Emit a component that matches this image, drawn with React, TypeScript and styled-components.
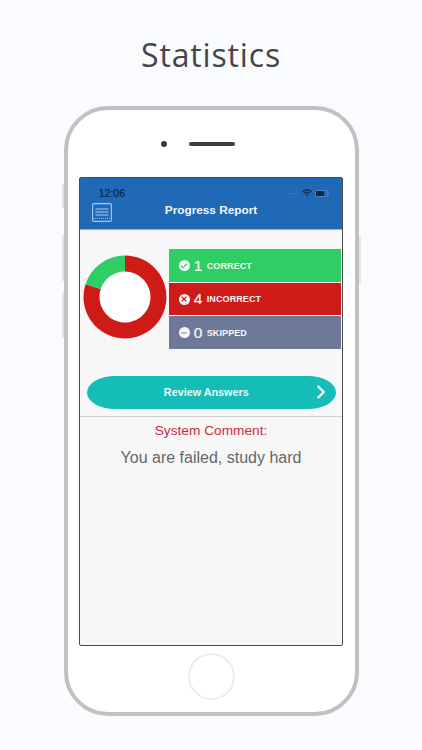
import React from "react";
import styled, { createGlobalStyle } from "styled-components";
import { Check, X, Minus, ChevronRight } from "lucide-react";

const GlobalStyle = createGlobalStyle`
    html, body {
        margin: 0;
        padding: 0;
        background-color: #FAFBFF;
        font-family: "Liberation Sans", Arial, sans-serif;
    }
`;

const Page = styled.div`
    width: 422px;
    height: 750px;
    overflow: hidden;
    display: flex;
    flex-direction: column;
    align-items: center;
    background-color: #FAFBFF;
`;

const Title = styled.h1`
    margin: 0;
    height: 106px;
    padding-top: 35px;
    box-sizing: border-box;
    font-family: "Open Sans", sans-serif;
    font-size: 32px;
    line-height: 40px;
    font-weight: 400;
    letter-spacing: 0.85px;
    color: #444548;
`;

const Phone = styled.div`
    position: relative;
    box-sizing: border-box;
    width: 295px;
    height: 610px;
    border: 4px solid #C1C1C1;
    border-radius: 44px;
    background-color: #FFFFFF;
    display: flex;
    flex-direction: column;
    align-items: center;
`;

const SideKey = styled.span<{ $side: "left" | "right"; $top: number; $height: number }>`
    position: absolute;
    ${(p) => p.$side}: -6px;
    top: ${(p) => p.$top}px;
    width: 2px;
    height: ${(p) => p.$height}px;
    background-color: #E4E4E6;
`;

const EarRow = styled.div`
    height: 67px;
    display: flex;
    align-items: center;
    gap: 22px;
    margin-left: -26px;
`;

const Camera = styled.span`
    width: 6px;
    height: 6px;
    border-radius: 50%;
    background-color: #3A3A3D;
`;

const Speaker = styled.span`
    width: 46px;
    height: 4px;
    border-radius: 2px;
    background-color: #3F3F42;
`;

const Screen = styled.div`
    box-sizing: border-box;
    width: 264.5px;
    height: 468.5px;
    border: 1.2px solid #4A4A4D;
    border-radius: 2px;
    background-color: #F7F7F7;
    display: flex;
    flex-direction: column;
`;

const Header = styled.header`
    height: 51px;
    flex-shrink: 0;
    background-color: #1F69B7;
    border-bottom: 1px solid #8FB4DB;
    display: flex;
    flex-direction: column;
`;

const StatusBar = styled.div`
    height: 21px;
    padding: 5px 12px 0 19px;
    display: flex;
    align-items: center;
    justify-content: space-between;
`;

const Clock = styled.span`
    font-size: 10.5px;
    font-weight: 400;
    color: #10253F;
    -webkit-text-stroke: 0.2px #10253F;
`;

const StatusIcons = styled.span`
    display: flex;
    align-items: center;
    gap: 3px;
`;

const NavBar = styled.div`
    position: relative;
    flex: 1;
    display: flex;
    align-items: center;
    justify-content: center;
    padding-bottom: 12px;
`;

const NavTitle = styled.span`
    font-size: 11.8px;
    font-weight: 700;
    color: #F2F6FB;
`;

const MenuButton = styled.svg`
    position: absolute;
    left: 12px;
    top: 0;
`;

const Summary = styled.section`
    display: flex;
    align-items: center;
    height: 100px;
    padding: 19px 0 0 3px;
    flex-shrink: 0;
`;

const Donut = styled.svg`
    flex-shrink: 0;
    margin: 0 2px 4px 0;
`;

const Bars = styled.div`
    width: 172px;
    display: flex;
    flex-direction: column;
    gap: 1px;
`;

const Bar = styled.div<{ $color: string }>`
    height: 32.5px;
    box-sizing: border-box;
    padding-left: 10px;
    display: flex;
    align-items: center;
    background-color: ${(p) => p.$color};
    color: #F8F8F8;
`;

const Badge = styled.span`
    width: 11px;
    height: 11px;
    border-radius: 50%;
    background-color: #F8F8F8;
    display: flex;
    align-items: center;
    justify-content: center;
    margin-right: 4px;
`;

const Count = styled.span`
    font-size: 15.5px;
    width: 13px;
    -webkit-text-stroke: 0.2px #F8F8F8;
`;

const BarLabel = styled.span`
    font-size: 9px;
    font-weight: 700;
    letter-spacing: 0.1px;
`;

const ReviewButton = styled.button`
    align-self: flex-start;
    box-sizing: border-box;
    width: 249px;
    height: 33px;
    margin: 27px 0 0 7px;
    padding: 0 4px 2px 0;
    border: none;
    border-radius: 28px / 16.5px;
    background-color: #15BDB8;
    color: #E8F8F7;
    font-family: "Liberation Sans", Arial, sans-serif;
    font-size: 10.8px;
    font-weight: 700;
    display: flex;
    align-items: center;
    justify-content: space-between;
`;

const ReviewText = styled.span`
    flex: 1;
    text-align: center;
    padding-left: 16px;
`;

const Divider = styled.hr`
    width: 100%;
    height: 1px;
    margin: 7px 0 0;
    border: none;
    background-color: #CFCFCF;
`;

const CommentTitle = styled.div`
    margin-top: 6px;
    text-align: center;
    font-size: 13.7px;
    line-height: 16px;
    color: #CC2A45;
`;

const CommentText = styled.div`
    margin-top: 9px;
    text-align: center;
    font-size: 16px;
    line-height: 20px;
    color: #666666;
`;

const HomeButton = styled.div`
    margin-top: 7px;
    box-sizing: border-box;
    width: 47px;
    height: 47px;
    border-radius: 50%;
    border: 2px solid #ECECEC;
`;

function ringPath(startDeg: number, endDeg: number) {
    const cx = 42, cy = 42, outer = 41.5, inner = 25.5;
    const pt = (r: number, d: number) => {
        const a = ((d - 90) * Math.PI) / 180;
        return `${(cx + r * Math.cos(a)).toFixed(2)} ${(cy + r * Math.sin(a)).toFixed(2)}`;
    };
    const large = endDeg - startDeg > 180 ? 1 : 0;
    return `M${pt(outer, startDeg)} A${outer} ${outer} 0 ${large} 1 ${pt(outer, endDeg)} L${pt(inner, endDeg)} A${inner} ${inner} 0 ${large} 0 ${pt(inner, startDeg)} Z`;
}

const rows = [
    { color: "#2FCE65", icon: Check, iconColor: "#2FCE65", count: 1, label: "CORRECT" },
    { color: "#CF1B18", icon: X, iconColor: "#CF1B18", count: 4, label: "INCORRECT" },
    { color: "#6E7899", icon: Minus, iconColor: "#6E7899", count: 0, label: "SKIPPED" },
];

export default function App() {
    return (
        <Page>
            <GlobalStyle />
            <Title>Statistics</Title>
            <Phone>
                <SideKey $side="left" $top={74} $height={24} />
                <SideKey $side="left" $top={125} $height={46} />
                <SideKey $side="left" $top={182} $height={46} />
                <SideKey $side="right" $top={127} $height={46} />
                <EarRow>
                    <Camera />
                    <Speaker />
                </EarRow>
                <Screen>
                    <Header>
                        <StatusBar>
                            <Clock>12:06</Clock>
                            <StatusIcons>
                                <svg width="11" height="4" viewBox="0 0 11 4">
                                    <path d="M0.5 2.5h10" stroke="#4F80B8" strokeWidth="1.2" strokeDasharray="1.2 1" />
                                </svg>
                                <svg width="10" height="8" viewBox="0 0 10 8">
                                    <path d="M0.6 2.8a6.2 6.2 0 0 1 8.8 0M2.2 4.4a4 4 0 0 1 5.6 0" stroke="#10253F" strokeWidth="1.2" fill="none" />
                                    <path d="M3.7 5.8a1.9 1.9 0 0 1 2.6 0L5 7.4z" fill="#10253F" />
                                </svg>
                                <svg width="15" height="7" viewBox="0 0 15 7">
                                    <rect x="0.5" y="0.5" width="12" height="6" rx="1.3" fill="none" stroke="#5E8CC0" strokeWidth="0.7" />
                                    <rect x="1" y="1" width="8" height="5" rx="0.8" fill="#10253F" />
                                    <rect x="13.2" y="2.4" width="1" height="2.2" fill="#5E8CC0" />
                                </svg>
                            </StatusIcons>
                        </StatusBar>
                        <NavBar>
                            <MenuButton width="20" height="19" viewBox="0 0 20 19">
                                <rect x="0.6" y="0.6" width="18.8" height="17.8" rx="1.5" fill="none" stroke="#A9C8E8" strokeWidth="1.1" />
                                <path d="M3.5 6h13M3.5 9h13M3.5 12h13" stroke="#C3D9EF" strokeWidth="0.9" />
                                <path d="M1 15.5h18" stroke="#A9C8E8" strokeWidth="0.8" strokeDasharray="1 1" />
                            </MenuButton>
                            <NavTitle>Progress Report</NavTitle>
                        </NavBar>
                    </Header>
                    <Summary>
                        <Donut width="84" height="84" viewBox="0 0 84 84">
                            <circle cx="42" cy="42" r="26" fill="#FFFFFF" />
                            <path d={ringPath(0, 288)} fill="#CF1B18" />
                            <path d={ringPath(288, 360)} fill="#2FCE65" />
                        </Donut>
                        <Bars>
                            {rows.map((row) => (
                                <Bar key={row.label} $color={row.color}>
                                    <Badge>
                                        <row.icon size={8} color={row.iconColor} strokeWidth={3.4} />
                                    </Badge>
                                    <Count>{row.count}</Count>
                                    <BarLabel>{row.label}</BarLabel>
                                </Bar>
                            ))}
                        </Bars>
                    </Summary>
                    <ReviewButton>
                        <ReviewText>Review Answers</ReviewText>
                        <ChevronRight size={22} color="#F2FBFA" strokeWidth={2.6} />
                    </ReviewButton>
                    <Divider />
                    <CommentTitle>System Comment:</CommentTitle>
                    <CommentText>You are failed, study hard</CommentText>
                </Screen>
                <HomeButton />
            </Phone>
        </Page>
    );
}
